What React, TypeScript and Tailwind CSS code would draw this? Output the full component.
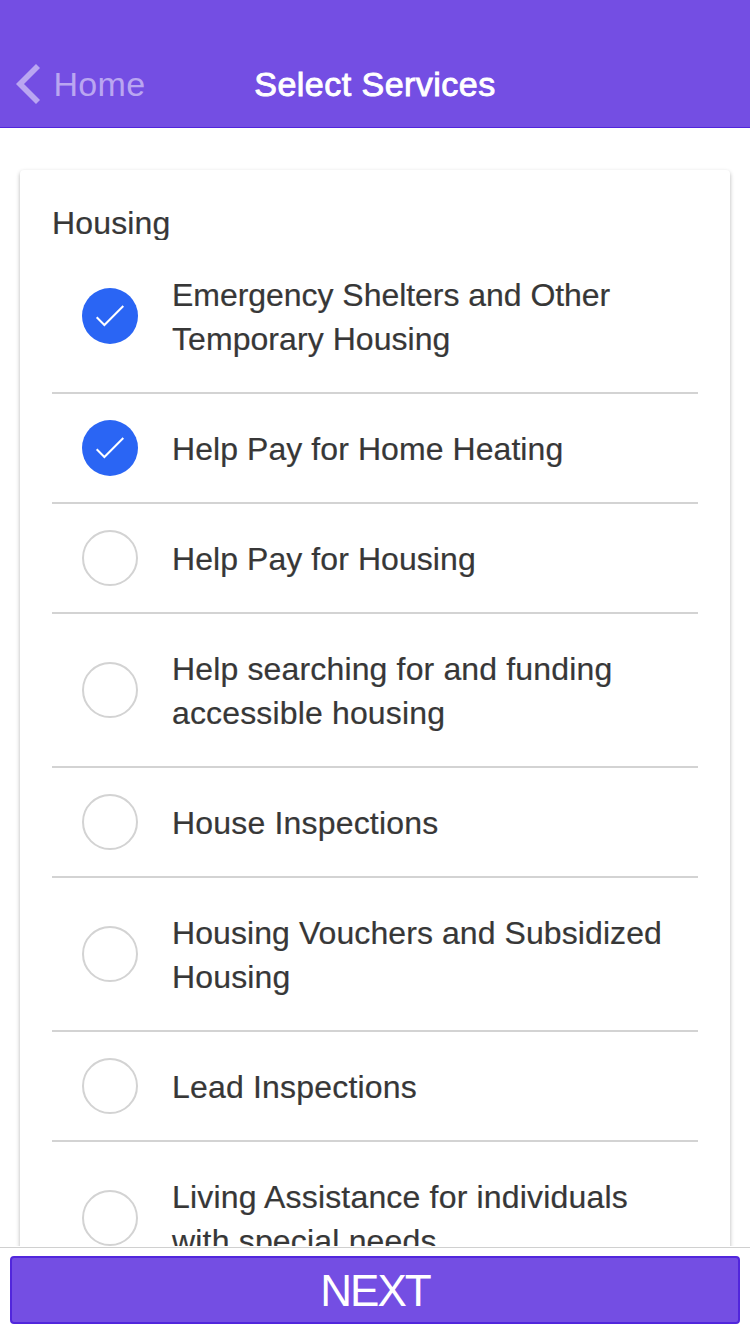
const services = [
  {
    lines: [
      { text: 'Emergency Shelters and Other', tracking: 'tracking-[-0.04px]' },
      { text: 'Temporary Housing', tracking: 'tracking-[0.06px]' },
    ],
    checked: true,
  },
  { lines: [{ text: 'Help Pay for Home Heating', tracking: 'tracking-[0.07px]' }], checked: true },
  { lines: [{ text: 'Help Pay for Housing', tracking: 'tracking-[0.07px]' }], checked: false },
  {
    lines: [
      { text: 'Help searching for and funding', tracking: 'tracking-[0.15px]' },
      { text: 'accessible housing', tracking: 'tracking-[0.15px]' },
    ],
    checked: false,
  },
  { lines: [{ text: 'House Inspections', tracking: 'tracking-[0.18px]' }], checked: false },
  {
    lines: [
      { text: 'Housing Vouchers and Subsidized', tracking: 'tracking-[0.08px]' },
      { text: 'Housing', tracking: 'tracking-[0.15px]' },
    ],
    checked: false,
  },
  { lines: [{ text: 'Lead Inspections', tracking: 'tracking-[0.19px]' }], checked: false },
  {
    lines: [
      { text: 'Living Assistance for individuals', tracking: 'tracking-[0.18px]' },
      { text: 'with special needs', tracking: 'tracking-[0.18px]' },
    ],
    checked: false,
  },
];

function Check({ checked }: { checked: boolean }) {
  if (!checked) {
    return <span className="size-14 shrink-0 rounded-full border-2 border-[#d3d3d3]" />;
  }
  return (
    <span className="size-14 shrink-0 rounded-full bg-[#2a65f4]">
      <svg viewBox="0 0 56 56" className="size-14" fill="none" stroke="#fff" strokeWidth="2">
        <path d="M14.7 29.3 L22.4 37 L41.3 18" />
      </svg>
    </span>
  );
}

export default function App() {
  return (
    <div className="flex h-[1334px] w-[750px] flex-col overflow-hidden bg-white font-['Liberation_Sans',Arial,sans-serif] text-[#373737]">
      <header className="grid h-32 shrink-0 grid-cols-[250px_1fr_250px] border-b border-[#5126dc] bg-[#744ee3] pt-10 text-[34px]">
        <button className="flex items-center pl-4 text-[#baa6f1]">
          <svg viewBox="0 0 24 40" className="h-10 w-6 shrink-0" fill="none" stroke="currentColor" strokeWidth="5.66">
            <path d="M22 2 L4 20 L22 38" />
          </svg>
          <span className="ml-[13.5px] leading-10 tracking-[0.3px]">Home</span>
        </button>
        <h1 className="flex items-center justify-center whitespace-nowrap pt-0.5 text-white tracking-[0.47px] [-webkit-text-stroke:0.9px_white]">
          Select Services
        </h1>
      </header>
      <main className="min-h-0 flex-1 overflow-hidden px-5 pt-[42px]">
        <section className="rounded-[4px] bg-white px-8 shadow-[0_2px_4px_rgba(0,0,0,0.3)] [-webkit-text-stroke:0.2px_#373737]">
          <h2 className="h-[70px] overflow-hidden pt-[31px] text-[32px] leading-[44px] tracking-[0.15px]">Housing</h2>
          <ul>
            {services.map((s) => (
              <li key={s.lines[0].text} className="flex items-center gap-[34px] border-b-2 border-[#d3d3d3] pl-[30px]">
                <Check checked={s.checked} />
                <div className="whitespace-nowrap pt-[33px] pb-[31px] text-[32px] leading-[44px]">
                  {s.lines.map((line) => (
                    <p key={line.text} className={line.tracking}>{line.text}</p>
                  ))}
                </div>
              </li>
            ))}
          </ul>
        </section>
      </main>
      <footer className="mt-px h-[87px] shrink-0 border-t border-[#d0d0d0] px-2.5 pt-2">
        <button className="flex h-[68px] w-full items-center justify-center rounded-[4px] border-2 border-[#5126dc] bg-[#744ee3] pt-0.5 text-[44px] leading-none tracking-[-2px] text-white">
          NEXT
        </button>
      </footer>
    </div>
  );
}
